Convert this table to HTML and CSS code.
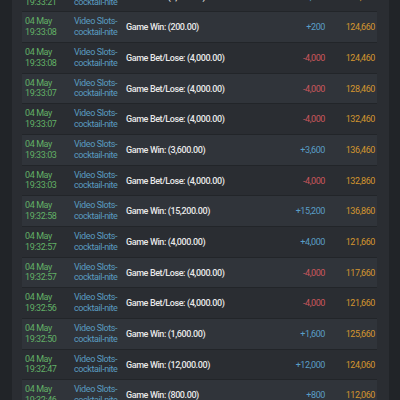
FILE: index.html
```html
<!DOCTYPE html>
<html lang="en">
<head>
<meta charset="utf-8">
<title>Transactions</title>
<link rel="stylesheet" href="styles.css">
</head>
<body>
<div class="panel">
  <div class="list">
    <div class="row dark"><div class="date">04 May<br>19:33:21</div><div class="game">Video Slots-<br>cocktail-nite</div><div class="desc">Game Win: (4,000.00)</div><div class="amt plus">+4,000</div><div class="bal">128,660</div></div>
    <div class="row light"><div class="date">04 May<br>19:33:08</div><div class="game">Video Slots-<br>cocktail-nite</div><div class="desc">Game Win: (200.00)</div><div class="amt plus">+200</div><div class="bal">124,660</div></div>
    <div class="row dark"><div class="date">04 May<br>19:33:08</div><div class="game">Video Slots-<br>cocktail-nite</div><div class="desc">Game Bet/Lose: (4,000.00)</div><div class="amt minus">-4,000</div><div class="bal">124,460</div></div>
    <div class="row light"><div class="date">04 May<br>19:33:07</div><div class="game">Video Slots-<br>cocktail-nite</div><div class="desc">Game Bet/Lose: (4,000.00)</div><div class="amt minus">-4,000</div><div class="bal">128,460</div></div>
    <div class="row dark"><div class="date">04 May<br>19:33:07</div><div class="game">Video Slots-<br>cocktail-nite</div><div class="desc">Game Bet/Lose: (4,000.00)</div><div class="amt minus">-4,000</div><div class="bal">132,460</div></div>
    <div class="row light"><div class="date">04 May<br>19:33:03</div><div class="game">Video Slots-<br>cocktail-nite</div><div class="desc">Game Win: (3,600.00)</div><div class="amt plus">+3,600</div><div class="bal">136,460</div></div>
    <div class="row dark"><div class="date">04 May<br>19:33:03</div><div class="game">Video Slots-<br>cocktail-nite</div><div class="desc">Game Bet/Lose: (4,000.00)</div><div class="amt minus">-4,000</div><div class="bal">132,860</div></div>
    <div class="row light"><div class="date">04 May<br>19:32:58</div><div class="game">Video Slots-<br>cocktail-nite</div><div class="desc">Game Win: (15,200.00)</div><div class="amt plus">+15,200</div><div class="bal">136,860</div></div>
    <div class="row dark"><div class="date">04 May<br>19:32:57</div><div class="game">Video Slots-<br>cocktail-nite</div><div class="desc">Game Win: (4,000.00)</div><div class="amt plus">+4,000</div><div class="bal">121,660</div></div>
    <div class="row light"><div class="date">04 May<br>19:32:57</div><div class="game">Video Slots-<br>cocktail-nite</div><div class="desc">Game Bet/Lose: (4,000.00)</div><div class="amt minus">-4,000</div><div class="bal">117,660</div></div>
    <div class="row dark"><div class="date">04 May<br>19:32:56</div><div class="game">Video Slots-<br>cocktail-nite</div><div class="desc">Game Bet/Lose: (4,000.00)</div><div class="amt minus">-4,000</div><div class="bal">121,660</div></div>
    <div class="row light"><div class="date">04 May<br>19:32:50</div><div class="game">Video Slots-<br>cocktail-nite</div><div class="desc">Game Win: (1,600.00)</div><div class="amt plus">+1,600</div><div class="bal">125,660</div></div>
    <div class="row dark"><div class="date">04 May<br>19:32:47</div><div class="game">Video Slots-<br>cocktail-nite</div><div class="desc">Game Win: (12,000.00)</div><div class="amt plus">+12,000</div><div class="bal">124,060</div></div>
    <div class="row light"><div class="date">04 May<br>19:32:46</div><div class="game">Video Slots-<br>cocktail-nite</div><div class="desc">Game Win: (800.00)</div><div class="amt plus">+800</div><div class="bal">112,060</div></div>
  </div>
</div>
</body>
</html>
```
FILE: styles.css
```css
html, body {
  margin: 0;
  padding: 0;
  background: #212428;
  height: 400px;
  overflow: hidden;
}
body {
  font-family: Roboto, "Liberation Sans", sans-serif;
  font-size: 9px;
  letter-spacing: -0.4px;
}
.panel {
  margin: 0 11px 0 12px;
  background: #2a2d32;
  padding: 0 12px 0 10px;
  height: 400px;
  overflow: hidden;
}
.list {
  margin-top: -19.33px;
  display: flex;
  flex-direction: column;
}
.row {
  box-sizing: border-box;
  height: 30.67px;
  flex: none;
  border-top: 1px solid #222529;
  display: grid;
  grid-template-columns: 49px 52px 1fr 60px 50px;
  align-items: center;
  padding: 0 2px 0 3px;
  line-height: 10.67px;
}
.row.light { background: #30343a; }
.row.dark { background: #2a2d32; }
.date { color: #62b066; }
.game { color: #5a9cc0; }
.desc {
  color: #e8e8e8;
  font-weight: 500;
  white-space: nowrap;
  padding-top: 1px;
}
.amt, .bal {
  text-align: right;
  padding-top: 1px;
}
.plus { color: #5a9ec6; }
.minus { color: #cc575c; }
.bal { color: #d4962f; }
```
